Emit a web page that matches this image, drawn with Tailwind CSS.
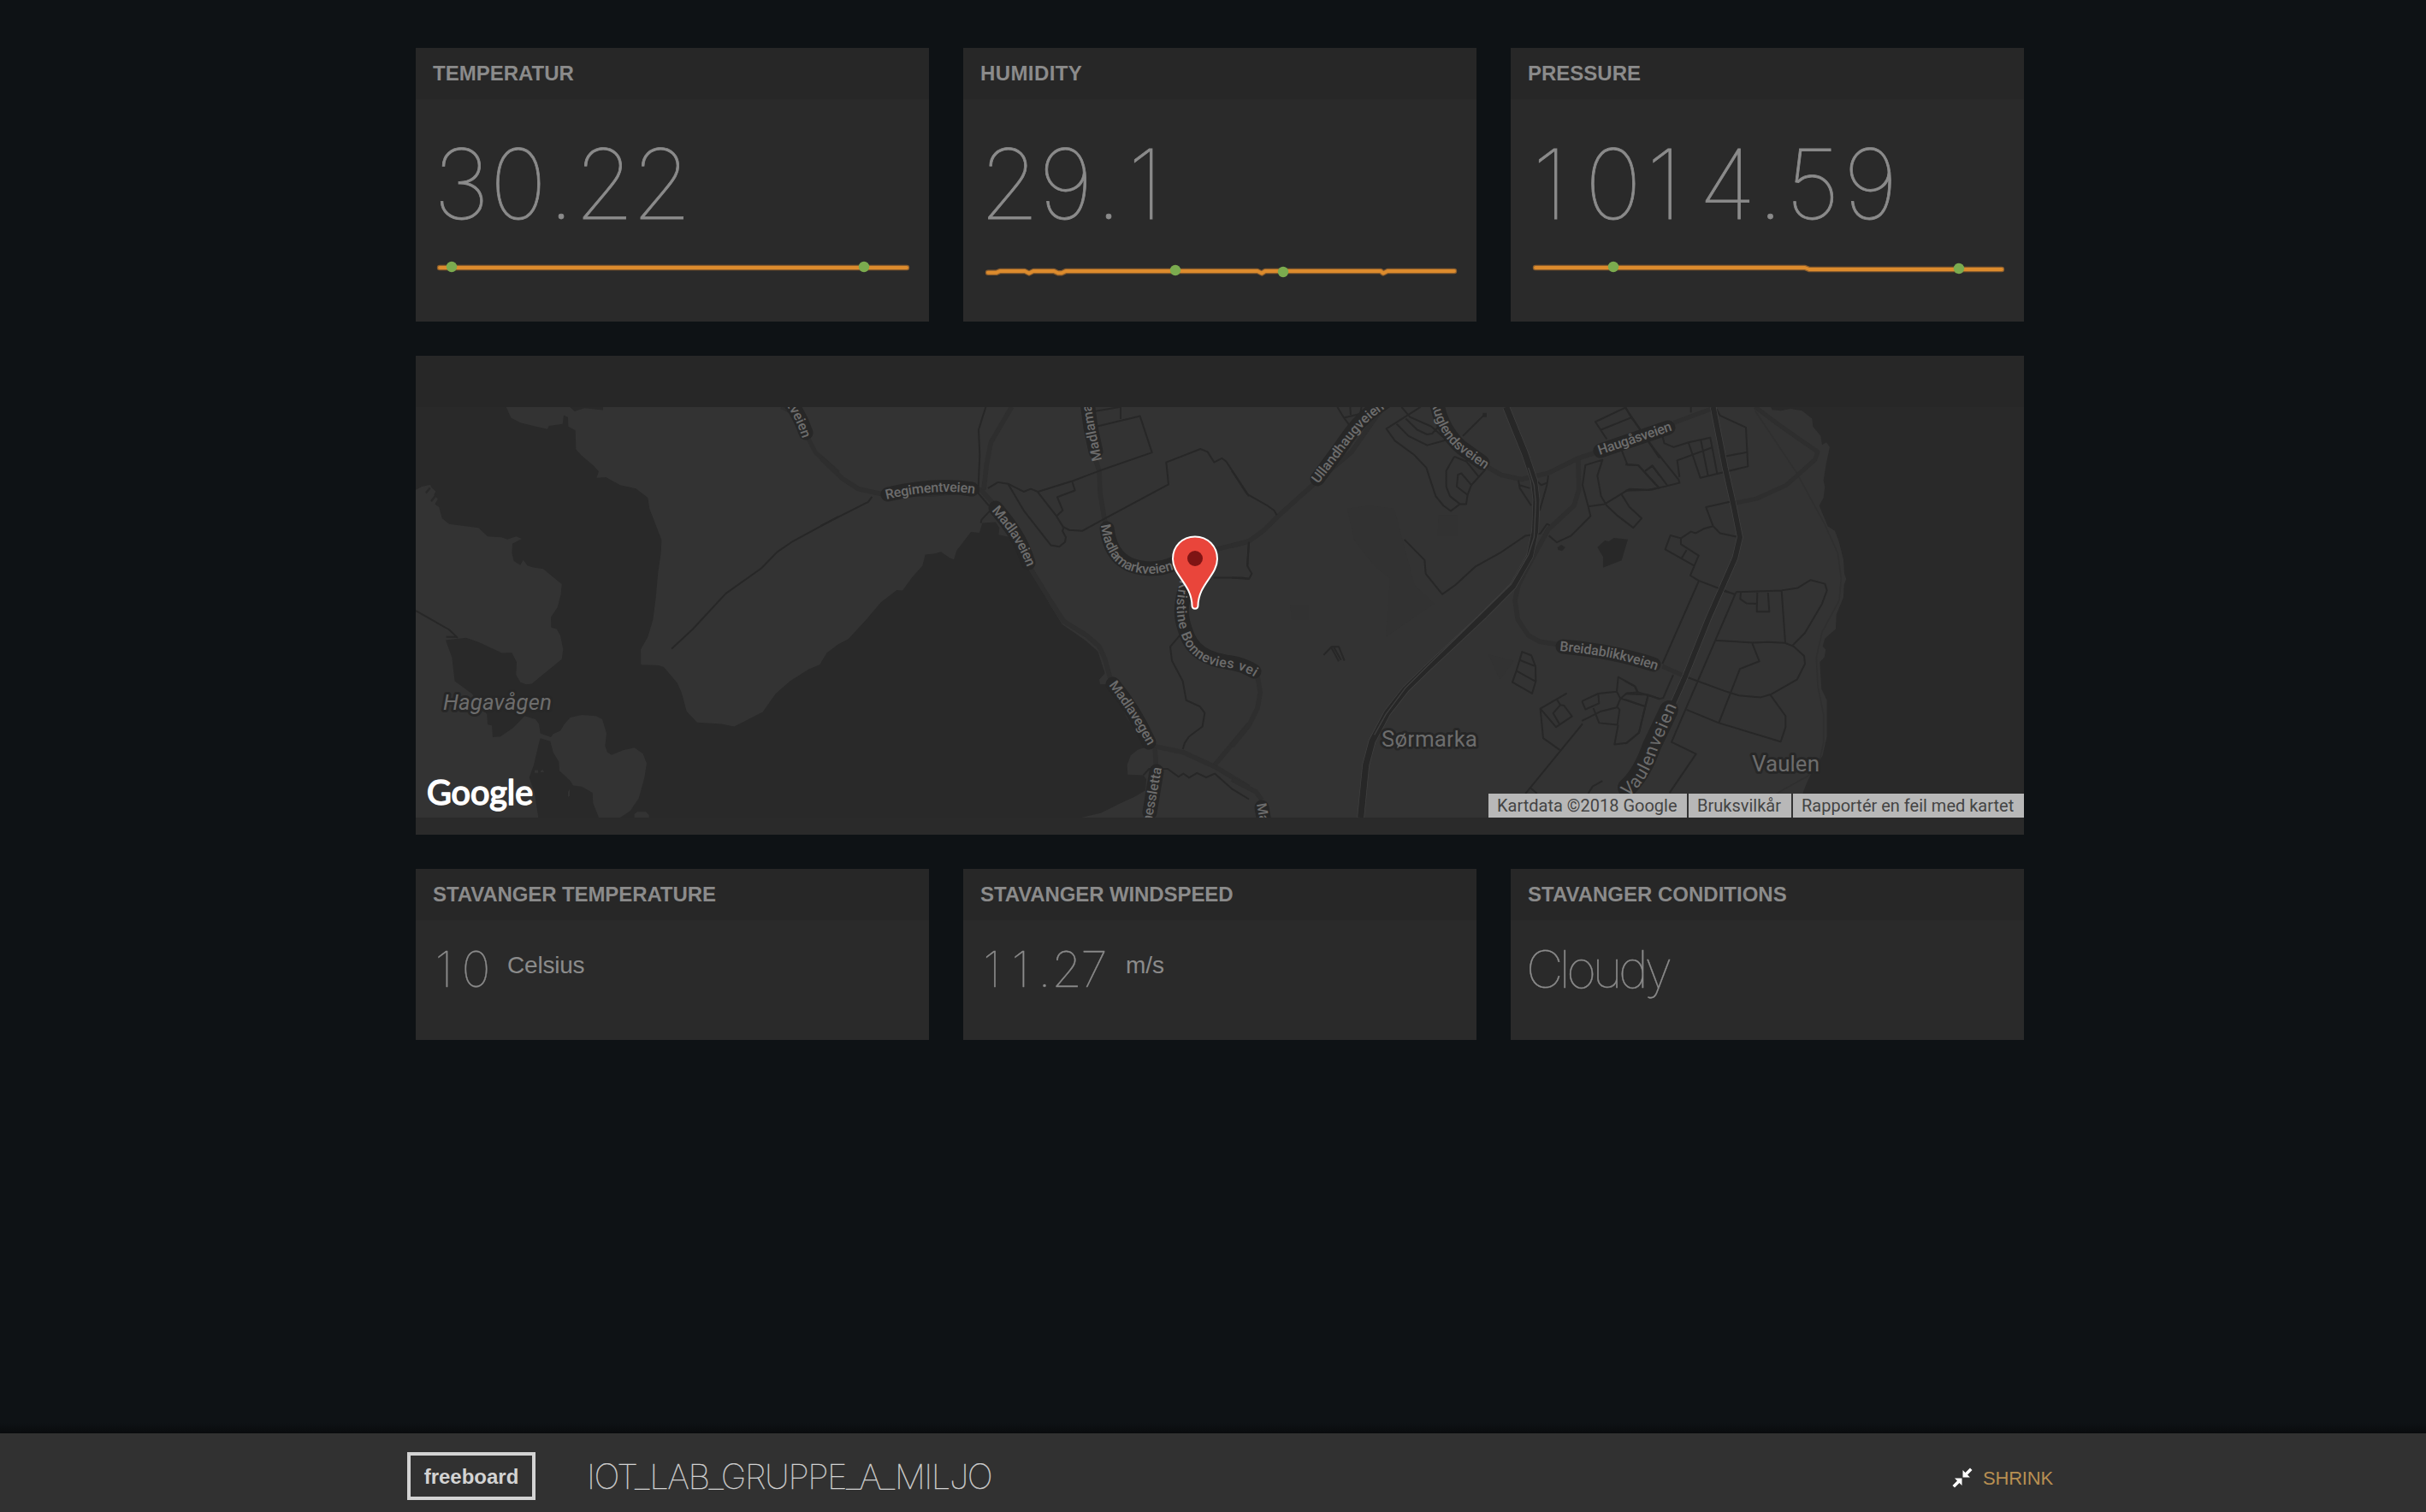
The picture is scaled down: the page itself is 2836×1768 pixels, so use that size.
<!DOCTYPE html>
<html lang="no">
<head>
<meta charset="utf-8">
<title>IOT_LAB_GRUPPE_A_MILJO</title>
<script src="https://cdn.jsdelivr.net/npm/@tailwindcss/browser@4"></script>
</head>
<body class="bg-[#0e1215] font-['Liberation_Sans',sans-serif] text-[#8b8b8b]">
<div class="flex h-[1768px] w-[2836px] flex-col overflow-hidden">
<main class="ml-[486px] flex w-[1880px] grow flex-col gap-10 pt-14">

  <div class="grid grid-cols-3 gap-10">
    <section class="h-80 bg-[#2a2a2a]">
      <h2 class="h-[60px] bg-[#272727] pl-5 text-2xl leading-[60px] font-bold">TEMPERATUR</h2>
      <svg class="block font-['Inter',sans-serif] text-[113px] font-thin" width="600" height="180" viewBox="486 116 600 180" fill="#8b8b8b" stroke="#8b8b8b" stroke-width=".8" text-anchor="middle"><text x="539.4 606 656 706.7 773.7" y="256">30.22</text></svg>
      <svg class="block" width="600" height="40" viewBox="486 296 600 40" fill="none">
        <path d="M514 313H1060" stroke="#8b5d2c" stroke-width="6.4" stroke-linecap="round"/><path d="M514 313H1060" stroke="#dc8b2d" stroke-width="4" stroke-linecap="round"/>
        <circle cx="528" cy="312" r="6.2" fill="#7bab4f"/><circle cx="1010" cy="312" r="6.2" fill="#7bab4f"/>
      </svg>
    </section>
    <section class="h-80 bg-[#2a2a2a]">
      <h2 class="h-[60px] bg-[#272727] pl-5 text-2xl leading-[60px] font-bold tracking-[0.4px]">HUMIDITY</h2>
      <svg class="block font-['Inter',sans-serif] text-[113px] font-thin" width="600" height="180" viewBox="1126 116 600 180" fill="#8b8b8b" stroke="#8b8b8b" stroke-width=".8" text-anchor="middle"><text x="1180 1246 1296 1339" y="256">29.1</text></svg>
      <svg class="block" width="600" height="40" viewBox="1126 296 600 40" fill="none" stroke-linejoin="round" stroke-linecap="round">
        <path d="M1155 318.7H1165L1169 317H1198L1203 319.5 1208 317H1232L1237 319.3H1241L1246 317H1470L1475 319.5 1479 317H1614L1617 319.5 1622 317H1700" stroke="#8b5d2c" stroke-width="6.4"/>
        <path d="M1155 318.7H1165L1169 317H1198L1203 319.5 1208 317H1232L1237 319.3H1241L1246 317H1470L1475 319.5 1479 317H1614L1617 319.5 1622 317H1700" stroke="#dc8b2d" stroke-width="4"/>
        <circle cx="1374" cy="316" r="6.2" fill="#7bab4f"/><circle cx="1500" cy="318" r="6.2" fill="#7bab4f"/>
      </svg>
    </section>
    <section class="h-80 bg-[#2a2a2a]">
      <h2 class="h-[60px] bg-[#272727] pl-5 text-2xl leading-[60px] font-bold">PRESSURE</h2>
      <svg class="block font-['Inter',sans-serif] text-[113px] font-thin" width="600" height="180" viewBox="1766 116 600 180" fill="#8b8b8b" stroke="#8b8b8b" stroke-width=".8" text-anchor="middle"><text x="1812 1886 1945.5 2019.4 2069.6 2119 2186.7" y="256">1014.59</text></svg>
      <svg class="block" width="600" height="40" viewBox="1766 296 600 40" fill="none" stroke-linejoin="round" stroke-linecap="round">
        <path d="M1795 313H2110L2115 315H2340" stroke="#8b5d2c" stroke-width="6.4"/><path d="M1795 313H2110L2115 315H2340" stroke="#dc8b2d" stroke-width="4"/>
        <circle cx="1886" cy="312" r="6.2" fill="#7bab4f"/><circle cx="2290" cy="314" r="6.2" fill="#7bab4f"/>
      </svg>
    </section>
  </div>

  <section class="relative h-[560px] bg-[#2a2a2a]">
    <div class="h-[60px] bg-[#272727]"></div>
    <svg class="block" width="1880" height="480" viewBox="486 476 1880 480" fill="none" stroke-linejoin="round">
      <defs>
        <path id="l1" d="M1036 584Q1095 570 1142 578"/>
        <path id="l2" d="M1159 597C1175 616 1189 632 1201 664"/>
        <path id="l3" d="M1288 538L1280 500 1270 440 1266 400"/>
        <path id="l4" d="M1287 614C1291 645 1304 671 1345 671Q1364 671 1392 658"/>
        <path id="l5" d="M1391 643C1374 685 1373 715 1379 735C1386 765 1405 778 1437 781Q1453 783 1467 792"/>
        <path id="l6" d="M1296 801Q1322 835 1343 874"/>
        <path id="l7" d="M1338 1000L1348 952 1358 898"/>
        <path id="l8" d="M1469 940L1477 985"/>
        <path id="l9" d="M1541 566L1573 524Q1590 500 1606 487L1645 458"/>
        <path id="l10" d="M1664 440L1677 485Q1686 512 1705 527L1736 549"/>
        <path id="l11" d="M1870 532L1956 503"/>
        <path id="l12" d="M1823 761Q1885 766 1937 784"/>
        <path id="l13" d="M1903 932Q1925 916 1938 876L1961 824"/>
        <path id="l14" d="M898 450Q926 474 938 513"/>
      </defs>
      <rect x="486" y="476" width="1880" height="480" fill="#333"/>
      <!-- western tile -->
      <g transform="translate(480 410) scale(.333333 .369898)">
        <path fill="#292929" d="M18 178H335L352 212 385 228 440 240 480 248 485 238 533 232 537 205 552 210 553 240 578 252 580 312 600 332 640 362 660 382 652 402 685 400 735 425 790 436 832 465 838 500 880 598 878 640 868 700 860 780 850 850 832 905 807 945 808 993 870 995 888 1000 935 1050 950 1080 968 1140 1005 1175 1090 1180 1135 1188 1235 1142 1280 1085 1330 1045 1395 1008 1435 992 1460 960 1500 930V1476H735L770 1455 800 1415 820 1350 828 1305 815 1275 785 1255 745 1263 705 1278 690 1270 682 1250 687 1210 672 1165 650 1155 600 1152 560 1160 540 1180 525 1202 500 1212 492 1222 455 1210 450 1180 438 1165 400 1155 360 1192 315 1220 288 1222 285 1185 270 1182 268 1150 215 1085 155 1045 150 1010 145 970 123 915 195 908 240 922 320 956 355 955 372 985 370 1025 385 1048 405 1055 425 1053 530 975 535 945 525 900 512 880 493 875 492 842 515 812 527 770 530 738 465 690 430 685 410 680 395 662 385 678 362 665 355 640 357 610 390 595 370 587 340 597 318 590 270 587 238 560 135 548 110 530 100 495 85 485 95 470 82 455 88 445 72 432 70 424 40 430 18 440ZM455 1225L490 1235 500 1270 520 1300 522 1328 560 1360 570 1375 600 1378 638 1398 640 1430 660 1476H448L435 1400 416 1350 432 1310 450 1240ZM558 178L575 192 610 182 675 188V178Z"/>
        <path stroke="#292929" stroke-width="7" d="M54 450L68 434M72 476L90 456"/>
        <path fill="#333" d="M785 1476V1465L795 1458H825L836 1468V1476ZM435 1326h12v9h-12zM456 1328l8-3 4 8h-12zM552 1395l6-8v20l-6 4z"/>
        <g stroke="#272727" stroke-width="2">
          <path vector-effect="non-scaling-stroke" d="M18 822L135 882 165 908M125 905H160M915 943L990 880 1105 768 1230 688 1285 637 1340 603 1500 525"/>
        </g>
        <path vector-effect="non-scaling-stroke" stroke="#2e2e2e" stroke-width="5" d="M1300 178L1340 195 1390 270 1420 322 1500 385"/>
      </g>
      <!-- bay and Madla -->
      <g transform="translate(960 410) scale(.333333 .369898)">
        <path fill="#292929" d="M0 985L20 955 60 928 95 912 160 848 210 795 265 757 285 758 320 715 355 680 365 645 395 642 420 636 450 655 465 660 475 632 525 573 555 576 565 545 612 542 625 560 622 582 655 588 735 690 800 800 845 865 925 915 970 950 995 1020 975 1040 978 1055 1010 1055 1150 1250 1110 1262 1085 1280 1073 1310 1075 1340 1130 1342 1140 1355 1137 1390 1100 1410 1040 1435 980 1462 912 1476H0Z"/>
        <g stroke="#2e2e2e" stroke-width="5.5">
          <path vector-effect="non-scaling-stroke" d="M0 340L75 405 130 437 220 455H380L560 440 600 480 735 690 800 785 850 855 930 900 975 935 995 975 1015 1040 1080 1160 1165 1250 1270 1270 1380 1315 1500 1380"/>
          <path vector-effect="non-scaling-stroke" d="M668 178L595 290 580 360 570 440M960 340L975 380 978 450 992 525 1010 600 1060 670 1150 700 1240 680 1310 650 1400 625 1500 603M1380 1310L1500 1180M1170 1255L1175 1320 1140 1476M1275 740L1260 820 1290 900 1350 970 1430 995 1500 1010"/>
        </g>
        <g stroke="#272727" stroke-width="2">
          <path vector-effect="non-scaling-stroke" d="M0 553L165 478 178 462M577 178L552 250 556 330 550 450 588 490M560 545L562 535 590 508M585 435L620 416 655 421 710 446 735 437 760 446 885 411 975 380 1160 322 1118 207 965 240M958 192L1050 178V216M760 448L825 523 847 505 828 463 890 442 880 413M655 421L710 505 805 615 835 620 855 605 858 590 846 570 850 560 825 523M850 558L870 567 915 570 1000 528 1218 423 1210 353 1330 311 1355 320 1378 353 1405 340 1420 350 1500 460M1260 898L1224 936 1230 980 1268 1045 1280 1105 1328 1125 1345 1145 1337 1188 1290 1220 1275 1240 1268 1260M1375 718H1475L1500 721M1500 600L1495 680"/>
          <path vector-effect="non-scaling-stroke" d="M1130 1342L1150 1322H1215L1253 1347 1270 1337 1290 1350 1318 1335 1350 1349 1380 1337 1440 1385 1500 1418"/>
        </g>
      </g>
      <!-- Ullandhaug, Sørmarka and the motorway -->
      <g transform="translate(1440 410) scale(.333333 .369898)">
        <g fill="#313131">
          <path d="M405 500L430 600 500 680 555 720 540 905 660 830 710 800 640 740 570 500 480 490ZM725 520H790V585H722ZM940 1040L990 980 900 960ZM205 805H270V850H210Z" opacity=".5"/>
        </g>
        <path fill="#282828" d="M1282 622L1308 600 1322 603 1340 592 1389 597 1367 663 1302 686V652ZM1142 622L1155 614 1170 622 1158 633 1144 630Z"/>
        <g stroke="#2e2e2e" stroke-width="5.5">
          <path vector-effect="non-scaling-stroke" d="M530 178L420 320 290 420 160 525 110 570 60 602 0 617M890 365L945 393 1015 407 1110 387 1215 340 1290 318 1500 250M1215 340L1217 440 1200 490 1110 565 1040 680 1005 740 993 790 1003 850 1040 900 1080 920 1150 930M90 1030L100 1080 90 1130 60 1185 0 1250M0 1355L85 1395 105 1420"/>
        </g>
        <g stroke="#272727" stroke-width="2">
          <path vector-effect="non-scaling-stroke" d="M0 380L53 453 125 490 148 505 158 520M60 605L54 680 70 705 60 722 0 718M370 178L393 212 420 245M393 212L450 200 455 178M415 178L417 203M595 178L625 210 700 240 750 280M662 178L542 247 572 285 640 330 682 370 715 460 742 490 768 507 800 485H822L827 455 840 425 890 375M578 232L620 270 685 299 755 282M610 215L650 250 685 265 703 262 725 240M885 203L810 270M780 335L752 380V430L765 460 800 485M780 335L822 350 865 398M840 425L805 388 793 392 789 430 827 456M822 350L830 340M605 597L676 662 680 705 738 770 785 740 855 682 940 640 1030 585 1082 578 1105 548 1115 552M1112 585L1140 606 1190 585 1258 523 1250 493 1230 425 1240 362 1300 345 1282 395 1295 460 1315 490 1350 520 1408 560 1437 530 1395 495 1367 455M1250 493L1308 485 1395 437 1460 440 1500 433M1315 280L1275 225 1380 180 1500 340M1295 250L1400 212M1365 310L1387 360 1425 362 1500 435M1450 380L1475 365 1500 395M1008 425L1045 435M1005 410L1010 435 1050 490M1110 395L1105 425 1080 505M1070 412L1085 425 1105 418"/>
          <path vector-effect="non-scaling-stroke" d="M322 962L350 936H375L395 980M350 940L375 982M358 938L383 978M1018 952L1050 963 1065 998 1066 1045 1053 1084 984 1048 998 1012ZM1007 977L1062 997M998 1012L1064 1045M1175 1083L1082 1132 1092 1225 1150 1262M1082 1132L1137 1190 1193 1156 1165 1122 1152 1120 1127 1146 1150 1182M1138 1100L1152 1120M1228 1108L1285 1084 1350 1078 1355 1032 1412 1060 1424 1082M1228 1108L1240 1134 1288 1115 1285 1084M1350 1078L1363 1100 1385 1083 1425 1080 1500 1100M1363 1100L1350 1128 1295 1140 1228 1170M1268 1130L1288 1177 1352 1183 1360 1135 1350 1125M1365 1100L1450 1125 1460 1090M1450 1125L1428 1208 1385 1240 1342 1245 1355 1183M1230 1180L1030 1400M1048 1383L1070 1400M1250 1400L1265 1378 1300 1360"/>
        </g>
        <path fill="#272727" d="M880 197h14v13h-14z"/>
        <path vector-effect="non-scaling-stroke" stroke="#414141" stroke-width="8.6" d="M962 178L1028 325 1060 410 1068 470 1064 570 1045 650 985 745 880 840 690 1000 610 1070 545 1145 492 1235 470 1310 452 1476"/>
        <path vector-effect="non-scaling-stroke" stroke="#272727" stroke-width="7.2" d="M962 178L1028 325 1060 410 1068 470 1064 570 1045 650 985 745 880 840 690 1000 610 1070 545 1145 492 1235 470 1310 452 1476"/>
        <path vector-effect="non-scaling-stroke" stroke="#3d3d3d" stroke-width="1.4" d="M1040 370L1060 425 1066 480 1060 590 1040 645 980 738 690 993 610 1065 540 1150 500 1215"/>
      </g>
      <!-- Vaulen and the fjord -->
      <g transform="translate(1900 410) scale(.333333 .369898)">
        <path fill="#292929" d="M510 178L515 187 545 190 580 184 620 190 655 215 658 240 685 270 690 298 705 290 717 305 705 355 695 410 700 430 695 465 680 490 710 555 735 570 748 600 765 660 768 705 775 722 767 740 765 780 740 835 738 880 700 910 692 935 703 945 698 970 682 985 688 1070 707 1105V1220L692 1280 650 1340 635 1370 622 1400V1476H1400V178Z"/>
        <path vector-effect="non-scaling-stroke" stroke="#2f2f2f" stroke-width="1.5" d="M455 190L600 385 700 550 745 640 757 720 750 790 690 890 670 970 675 1060 695 1150V1240L680 1300 640 1345 530 1400"/>
        <path vector-effect="non-scaling-stroke" stroke="#2e2e2e" stroke-width="5" d="M455 178L540 235 610 280 675 320 665 345 565 425 460 468 380 483M130 998L210 1030M170 228L305 183"/>
        <g stroke="#272727" stroke-width="2">
          <path vector-effect="non-scaling-stroke" d="M0 178L20 210 105 315 187 408 190 418 90 440 0 443M230 178V195M320 185L332 205 423 243 430 366 263 402 222 292M352 334L427 321M130 270L137 293 170 305 222 290 298 275 322 388M265 284L290 395M190 400L182 347 302 307M70 380L95 363 147 426M0 360L45 362 115 432M370 477L283 495 308 555 332 577 400 590M308 555L275 563 247 577 230 572 195 593 158 584 140 628 242 680 257 648 195 612V593M215 630L197 657M242 680L228 711 257 727 385 771M257 730L130 990M385 771L162 1237 248 1275 155 1398M345 760L385 770 390 763 548 758 605 750 650 725 700 737 707 758 690 800 630 892 585 933M548 758L561 924M405 765L403 785 425 799 460 800M463 762L461 825H505L500 762M315 916L450 923 500 921 560 924 590 935 627 965 630 990 602 1040 510 1087 475 1096 398 1090 345 1075 210 1030M445 925L470 982 402 1006 328 1177M215 1135L328 1177 545 1236 562 1190V1155L510 1090M0 1045L35 1062 45 1082M0 1085L80 1088 118 1101 133 1098 168 1025M0 1103L70 1125 80 1088M70 1125L48 1208 0 1243"/>
        </g>
        <path vector-effect="non-scaling-stroke" stroke="#424242" stroke-width="7.4" d="M308 178L350 370 380 490 402 590 385 655 290 850 210 1030 168 1115"/>
        <path vector-effect="non-scaling-stroke" stroke="#272727" stroke-width="6" d="M308 178L350 370 380 490 402 590 385 655 290 850 210 1030 168 1115"/>
      </g>
      <!-- dark bands behind the street names -->
      <g stroke="#272727" stroke-width="17" stroke-linecap="round">
        <path d="M1038 578Q1095 565 1136 572M1164 594C1180 613 1193 630 1202 658M1281 528L1275 500 1267 440M1294 618C1297 642 1308 664 1345 665Q1360 665 1375 658M1385 690C1380 710 1380 720 1385 735C1392 762 1411 771 1439 775Q1453 777 1466 785M1301 800Q1326 830 1343 868M1344 950L1352 902M1475 944L1481 980M1540 560L1568 522Q1585 496 1602 482L1630 462M1674 450L1683 485Q1691 508 1708 523L1733 541M1871 527L1950 500M1827 756Q1885 761 1933 777M910 455Q932 476 942 506"/>
        <path stroke-width="22" d="M1902 921Q1919 906 1931 872L1951 830"/>
      </g>
      <g fill="#6d6d6d" font-family="Roboto, sans-serif" font-size="16" font-weight="500">
        <text><textPath href="#l1" textLength="104">Regimentveien</textPath></text>
        <text><textPath href="#l2" textLength="79">Madlaveien</textPath></text>
        <text><textPath href="#l3">Madlamarkveien</textPath></text>
        <text><textPath href="#l4">Madlamarkveien</textPath></text>
        <text text-anchor="end" letter-spacing=".55"><textPath href="#l5" startOffset="100%">Kristine Bonnevies vei</textPath></text>
        <text><textPath href="#l6" textLength="85">Madlavegen</textPath></text>
        <text text-anchor="end"><textPath href="#l7" startOffset="100%">nessletta</textPath></text>
        <text><textPath href="#l8">Madla</textPath></text>
        <text><textPath href="#l9">Ullandhaugveien</textPath></text>
        <text text-anchor="end"><textPath href="#l10" startOffset="100%">Auglendsveien</textPath></text>
        <text><textPath href="#l11" textLength="90">Haugåsveien</textPath></text>
        <text><textPath href="#l12" textLength="116">Breidablikkveien</textPath></text>
        <text font-size="21" font-weight="400"><textPath href="#l13" textLength="122">Vaulenveien</textPath></text>
        <text text-anchor="end"><textPath href="#l14" startOffset="100%">ktveien</textPath></text>
        <g font-size="26" font-weight="400" stroke="#272727" stroke-width="6" paint-order="stroke">
          <text x="518" y="830" font-style="italic" textLength="127">Hagavågen</text>
          <text x="1615" y="873" textLength="112">Sørmarka</text>
          <text x="2048" y="902" textLength="79">Vaulen</text>
        </g>
      </g>
      <path fill="#e9453b" stroke="#fff" stroke-width="2" d="M1397 627.5C1382 627.5 1371 639 1371 653.500 1371 673 1393 683 1393.500 708 1393.600 713 1400.400 713 1400.500 708 1401 683 1423 673 1423 653.500 1423 639 1412 627.500 1397 627.500Z"/>
      <circle cx="1397" cy="653" r="9" fill="#7e1414"/>
      <text x="499" y="940.5" fill="#fff" stroke="#fff" stroke-width="1.7" font-family="Lato, sans-serif" font-size="40" font-weight="400" textLength="124" lengthAdjust="spacingAndGlyphs">Google</text>
    </svg>
    <div class="absolute right-0 bottom-5 flex h-7 gap-[2px] font-['Roboto',sans-serif] text-xl leading-7 whitespace-nowrap text-[#444]">
      <span class="w-[232px] bg-[#b8b8b8] pl-[10px]">Kartdata ©2018 Google</span>
      <span class="w-[120px] bg-[#b8b8b8] pl-[10px]">Bruksvilkår</span>
      <span class="w-[270px] bg-[#b8b8b8] pl-[10px]">Rapportér en feil med kartet</span>
    </div>
  </section>

  <div class="grid grid-cols-3 gap-10">
    <section class="h-[200px] bg-[#2a2a2a]">
      <h2 class="h-[60px] bg-[#272727] pl-5 text-2xl leading-[60px] font-bold tracking-[-0.1px]">STAVANGER TEMPERATURE</h2>
      <div class="flex"><svg class="font-['Inter',sans-serif] text-[57.5px] font-thin" width="107" height="120" viewBox="486 1076 107 120" fill="#8b8b8b" stroke="#8b8b8b" stroke-width=".4" text-anchor="middle"><text x="519 556.5" y="1154">10</text></svg><span class="text-[28px] leading-[105px] tracking-[-0.2px]">Celsius</span></div>
    </section>
    <section class="h-[200px] bg-[#2a2a2a]">
      <h2 class="h-[60px] bg-[#272727] pl-5 text-2xl leading-[60px] font-bold tracking-[-0.1px]">STAVANGER WINDSPEED</h2>
      <div class="flex"><svg class="font-['Inter',sans-serif] text-[57.5px] font-thin" width="190" height="120" viewBox="1126 1076 190 120" fill="#8b8b8b" stroke="#8b8b8b" stroke-width=".4" text-anchor="middle"><text x="1159.500 1193 1221 1247 1279" y="1154">11.27</text></svg><span class="text-[28px] leading-[105px]">m/s</span></div>
    </section>
    <section class="h-[200px] bg-[#2a2a2a]">
      <h2 class="h-[60px] bg-[#272727] pl-5 text-2xl leading-[60px] font-bold">STAVANGER CONDITIONS</h2>
      <div class="pl-[18px] font-['Inter',sans-serif] text-[60px] leading-[114px] font-thin tracking-[-4.5px] [-webkit-text-stroke:0.4px_#8b8b8b]">Cloudy</div>
    </section>
  </div>
</main>

<div class="h-3 bg-linear-to-b from-transparent to-[#090b0d]"></div>
<footer class="flex h-[92px] items-start bg-[#313131] pl-[476px] text-[#d3d3d3]">
  <div class="mt-[22px] h-14 w-[150px] border-4 border-[#d3d3d3] text-center text-2xl leading-[49px] font-bold">freeboard</div>
  <div class="ml-[60px] w-[1596px] font-['Inter',sans-serif] text-[40px] leading-[101px] font-thin tracking-[-1.45px] [-webkit-text-stroke:0.4px_#d3d3d3]">IOT_LAB_GRUPPE_A_MILJO</div>
  <div class="flex pt-[40px] text-[#b88f51]">
    <svg width="24" height="24" viewBox="0 0 24 24" fill="#fff"><path d="M12.500 11.500V3l3 3L21 .5 23.500 3 18 8.500l3 3ZM11.500 12.500V21l-3-3L3 23.500.5 21 6 15.500l-3-3Z"/></svg>
    <span class="ml-3 text-[22px] leading-[26px] tracking-[-0.2px]">SHRINK</span>
  </div>
</footer>
</div>
</body>
</html>
